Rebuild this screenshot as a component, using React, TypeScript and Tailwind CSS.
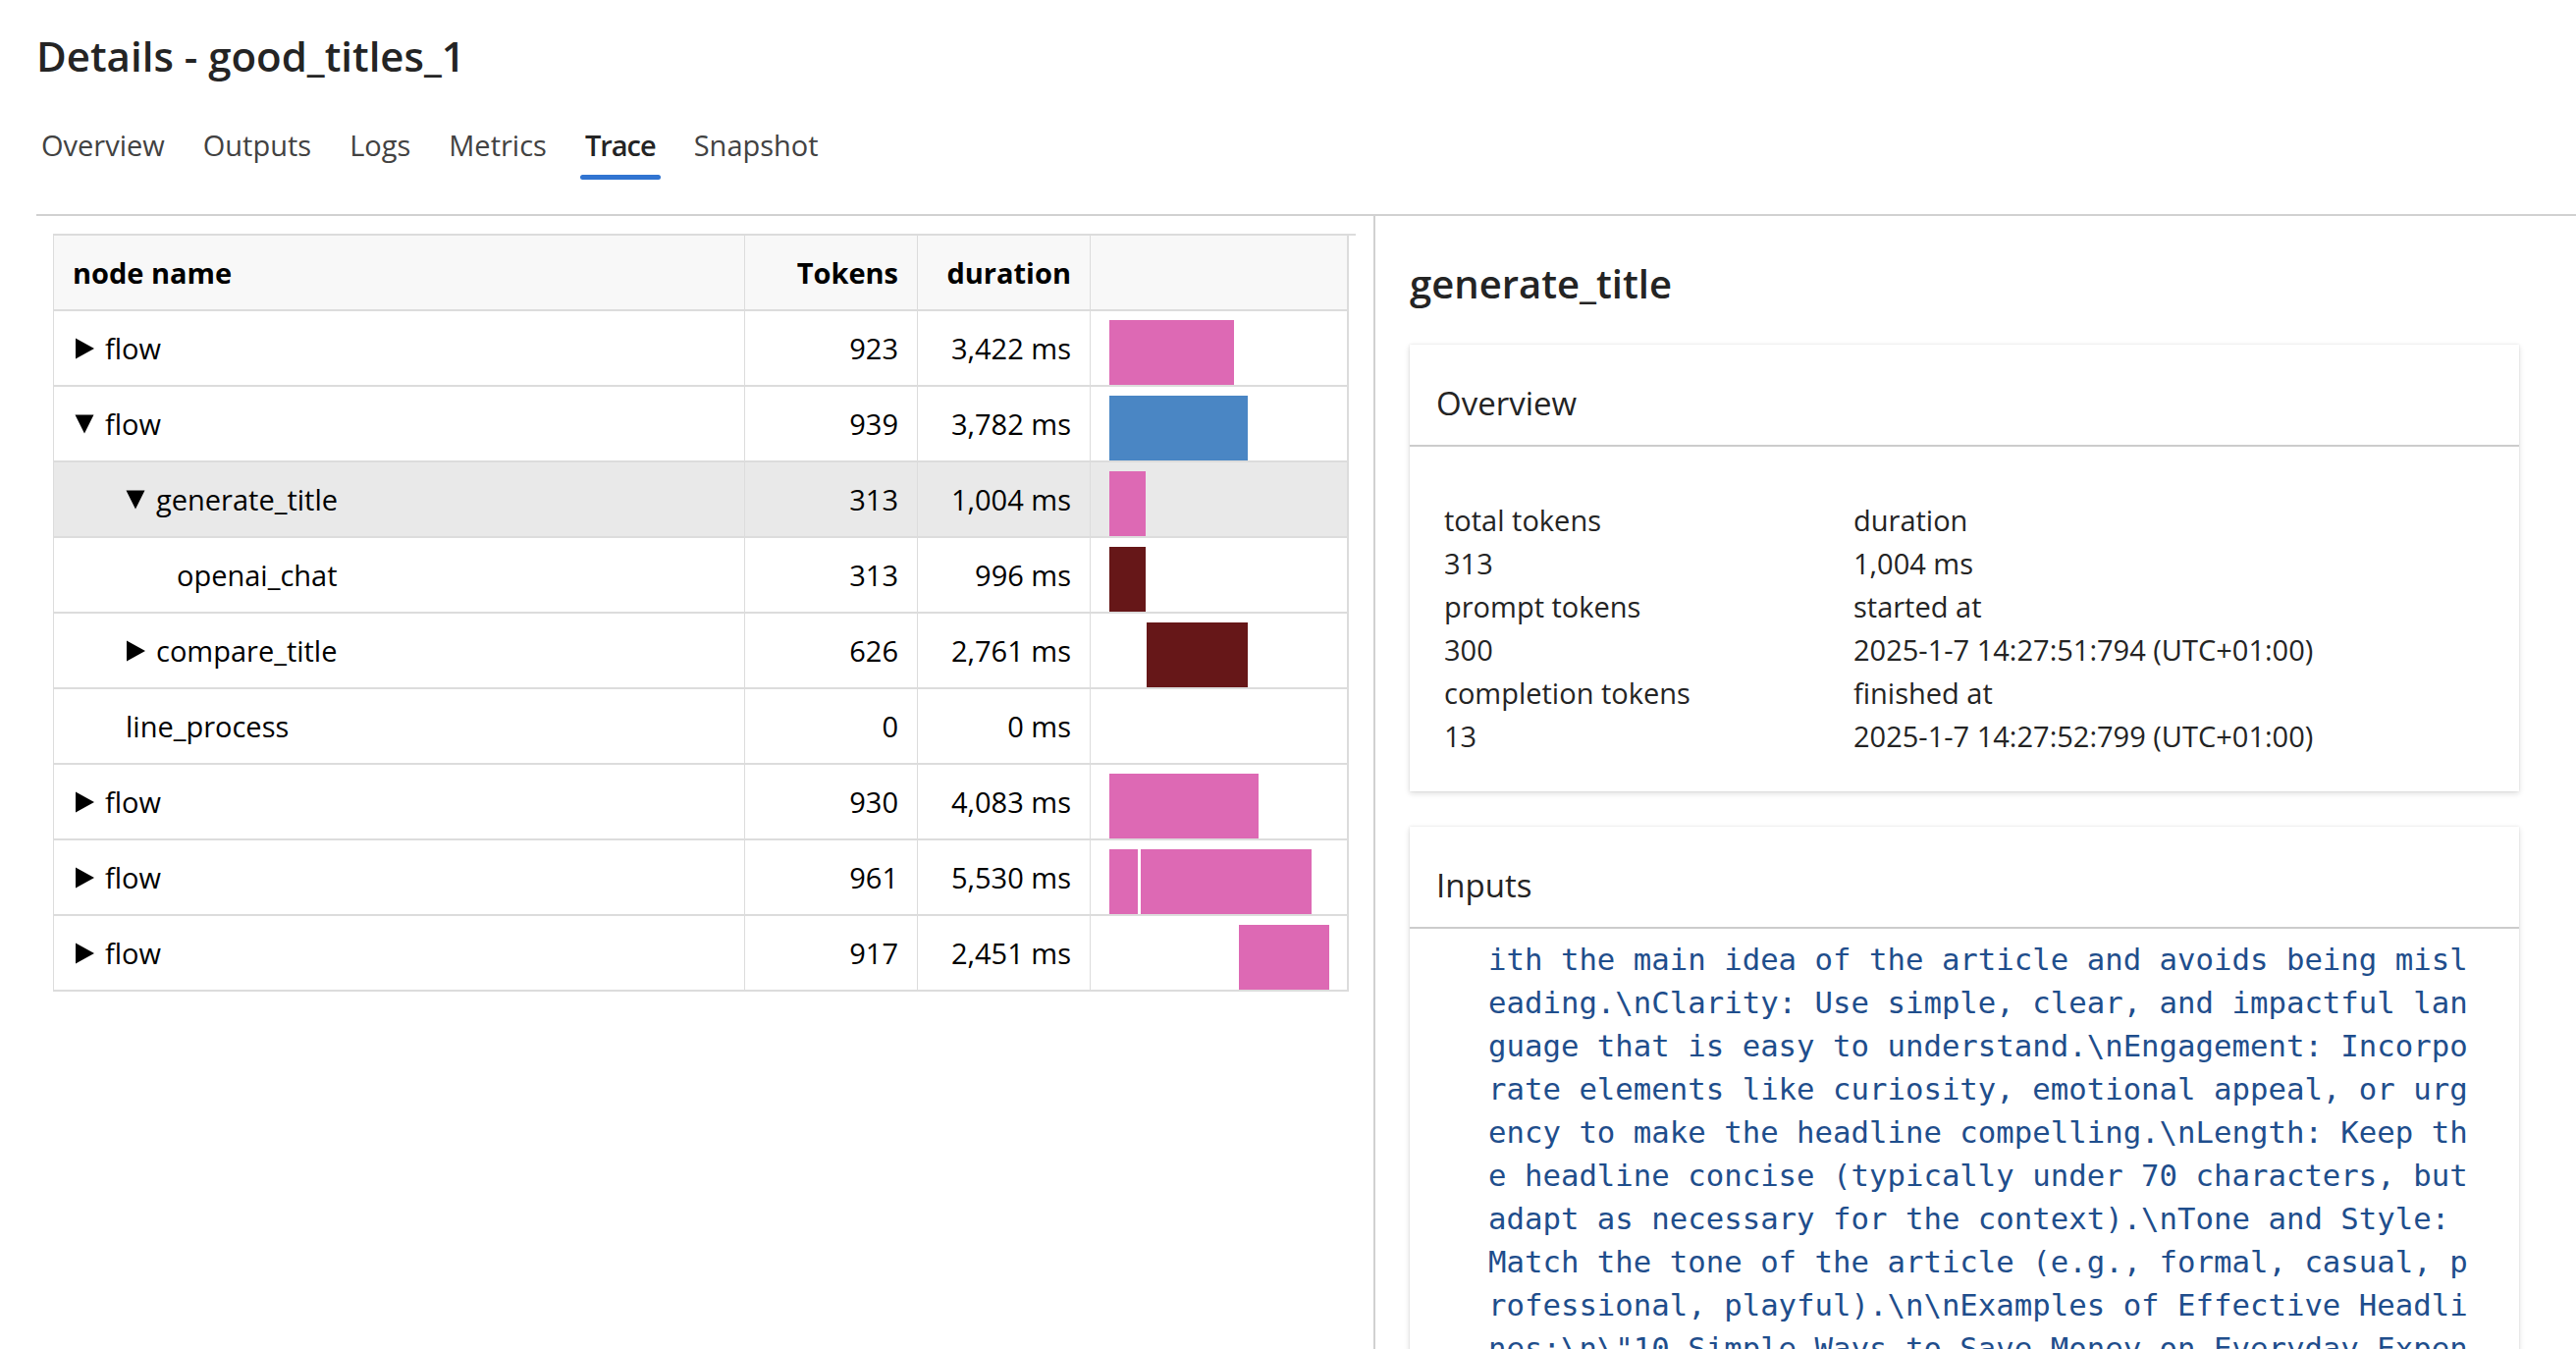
import React from "react";

type Seg = { left: number; width: number; color: string };
type Row = {
  name: string;
  level: number;
  toggle?: "open" | "closed";
  tokens: string;
  duration: string;
  bars: Seg[];
  selected?: boolean;
};

const PINK = "#dd69b4";
const BLUE = "#4a86c4";
const DARK = "#661718";

const rows: Row[] = [
  { name: "flow", level: 0, toggle: "closed", tokens: "923", duration: "3,422 ms", bars: [{ left: 0, width: 127, color: PINK }] },
  { name: "flow", level: 0, toggle: "open", tokens: "939", duration: "3,782 ms", bars: [{ left: 0, width: 141, color: BLUE }] },
  { name: "generate_title", level: 1, toggle: "open", tokens: "313", duration: "1,004 ms", bars: [{ left: 0, width: 37, color: PINK }], selected: true },
  { name: "openai_chat", level: 2, tokens: "313", duration: "996 ms", bars: [{ left: 0, width: 37, color: DARK }] },
  { name: "compare_title", level: 1, toggle: "closed", tokens: "626", duration: "2,761 ms", bars: [{ left: 38, width: 103, color: DARK }] },
  { name: "line_process", level: 1, tokens: "0", duration: "0 ms", bars: [] },
  { name: "flow", level: 0, toggle: "closed", tokens: "930", duration: "4,083 ms", bars: [{ left: 0, width: 152, color: PINK }] },
  {
    name: "flow",
    level: 0,
    toggle: "closed",
    tokens: "961",
    duration: "5,530 ms",
    bars: [
      { left: 0, width: 29, color: PINK },
      { left: 32, width: 174, color: PINK },
    ],
  },
  { name: "flow", level: 0, toggle: "closed", tokens: "917", duration: "2,451 ms", bars: [{ left: 132, width: 92, color: PINK }] },
];

const tabs = ["Overview", "Outputs", "Logs", "Metrics", "Trace", "Snapshot"];

const inputLines = [
  "ith the main idea of the article and avoids being misl",
  "eading.\\nClarity: Use simple, clear, and impactful lan",
  "guage that is easy to understand.\\nEngagement: Incorpo",
  "rate elements like curiosity, emotional appeal, or urg",
  "ency to make the headline compelling.\\nLength: Keep th",
  "e headline concise (typically under 70 characters, but",
  "adapt as necessary for the context).\\nTone and Style: ",
  "Match the tone of the article (e.g., formal, casual, p",
  "rofessional, playful).\\n\\nExamples of Effective Headli",
  'nes:\\n\\"10 Simple Ways to Save Money on Everyday Expen',
  'ses\\"\\n\\"The Surprising Benefits of Morning Walks\\"\\n',
];

function Caret({ open }: { open: boolean }) {
  if (open) {
    return (
      <svg width="20" height="21" viewBox="0 0 20 21" className="shrink-0">
        <path d="M0.5 1.5 H19.5 L10 20.5 Z" fill="#000" />
      </svg>
    );
  }
  return (
    <svg width="20" height="22" viewBox="0 0 20 22" className="shrink-0">
      <path d="M1 0.5 V21.5 L20 11 Z" fill="#000" />
    </svg>
  );
}

function TraceRow({ row }: { row: Row }) {
  return (
    <div
      className={`grid grid-cols-[704px_176px_176px_261px] h-[77px] border-b-2 border-[#dcdcdc] text-[29px] text-black ${
        row.selected ? "bg-[#e9e9e9]" : "bg-white"
      }`}
    >
      <div className="flex items-center border-r border-[#dcdcdc]" style={{ paddingLeft: 21 + row.level * 52 }}>
        {row.toggle && <Caret open={row.toggle === "open"} />}
        <span className={row.toggle ? "ml-[11px]" : ""}>{row.name}</span>
      </div>
      <div className="flex items-center justify-end pr-[19px] border-r border-[#dcdcdc]">{row.tokens}</div>
      <div className="flex items-center justify-end pr-[19px] border-r border-[#dcdcdc]">{row.duration}</div>
      <div className="flex pl-[19px] pt-[9px]">
        {row.bars.map((b, i) => (
          <div
            key={i}
            className="h-[66px] shrink-0"
            style={{
              marginLeft: i === 0 ? b.left : b.left - (row.bars[i - 1].left + row.bars[i - 1].width),
              width: b.width,
              backgroundColor: b.color,
            }}
          />
        ))}
      </div>
    </div>
  );
}

function Card({ title, children }: { title: string; children: React.ReactNode }) {
  return (
    <div className="bg-white shadow-[0_2px_6px_rgba(0,0,0,0.14),0_0_2px_rgba(0,0,0,0.1)]">
      <div className="pl-[27px] pt-[36px] pb-[18px] border-b-2 border-[#cccccc] text-[33px] leading-[48px]">{title}</div>
      {children}
    </div>
  );
}

export default function App() {
  return (
    <div className="h-screen overflow-hidden bg-white font-['Open_Sans',sans-serif] text-[#242424]">
      <div className="pl-[37px]">
        <h1 className="pt-[29px] text-[42px] leading-[56px] font-semibold">Details - good_titles_1</h1>

        {/* Tabs */}
        <nav className="mt-[43px] mb-[35px] flex gap-[29px]">
          {tabs.map((t) => {
            const active = t === "Trace";
            return (
              <div key={t} className="flex flex-col px-[5px]">
                <span
                  className={`text-[29px] leading-[40px] ${
                    active ? "font-semibold tracking-[-1px] text-[#242424]" : "text-[#424242]"
                  }`}
                >
                  {t}
                </span>
                <div className={`mt-[10px] h-[5px] -mx-[5px] rounded-full ${active ? "bg-[#3174d1]" : "bg-transparent"}`} />
              </div>
            );
          })}
        </nav>

        <div className="flex border-t-2 border-[#d1d1d1]">
          {/* Trace tree */}
          <div className="w-[1362px] shrink-0 pl-[17px] pt-[18px]">
            <div className="w-[1327px] border-t-2 border-[#dcdcdc]">
              <div className="w-[1320px] border-l border-r-2 border-[#dcdcdc]">
                <div className="grid grid-cols-[704px_176px_176px_261px] h-[77px] border-b-2 border-[#dcdcdc] bg-[#f8f8f8] text-[29px] font-bold text-black">
                  <div className="flex items-center pl-[19px] border-r border-[#dcdcdc]">node name</div>
                  <div className="flex items-center justify-end pr-[19px] border-r border-[#dcdcdc]">Tokens</div>
                  <div className="flex items-center justify-end pr-[19px] border-r border-[#dcdcdc]">duration</div>
                  <div />
                </div>
                {rows.map((r, i) => (
                  <TraceRow key={i} row={r} />
                ))}
              </div>
            </div>
          </div>

          {/* Node details */}
          <div className="flex-1 border-l-2 border-[#d1d1d1] pl-[35px] pr-[58px] pt-[42px] min-h-[1200px]">
            <h2 className="text-[40px] leading-[54px] font-semibold mb-[35px]">generate_title</h2>

            <Card title="Overview">
              <div className="grid grid-cols-[417px_1fr] pl-[35px] pt-[53px] pb-[34px] text-[29px] leading-[44px]">
                <div>
                  <div>total tokens</div>
                  <div>313</div>
                  <div>prompt tokens</div>
                  <div>300</div>
                  <div>completion tokens</div>
                  <div>13</div>
                </div>
                <div>
                  <div>duration</div>
                  <div>1,004 ms</div>
                  <div>started at</div>
                  <div>2025-1-7 14:27:51:794 (UTC+01:00)</div>
                  <div>finished at</div>
                  <div>2025-1-7 14:27:52:799 (UTC+01:00)</div>
                </div>
              </div>
            </Card>

            <div className="mt-[36px]">
              <Card title="Inputs">
                <div className="pl-[80px] pt-[10px] pb-[40px] font-['DejaVu_Sans_Mono',monospace] text-[30.7px] leading-[44px] text-[#1f4e8c]">
                  {inputLines.map((l, i) => (
                    <div key={i} className="whitespace-pre">
                      {l}
                    </div>
                  ))}
                </div>
              </Card>
            </div>
          </div>
        </div>
      </div>
    </div>
  );
}
